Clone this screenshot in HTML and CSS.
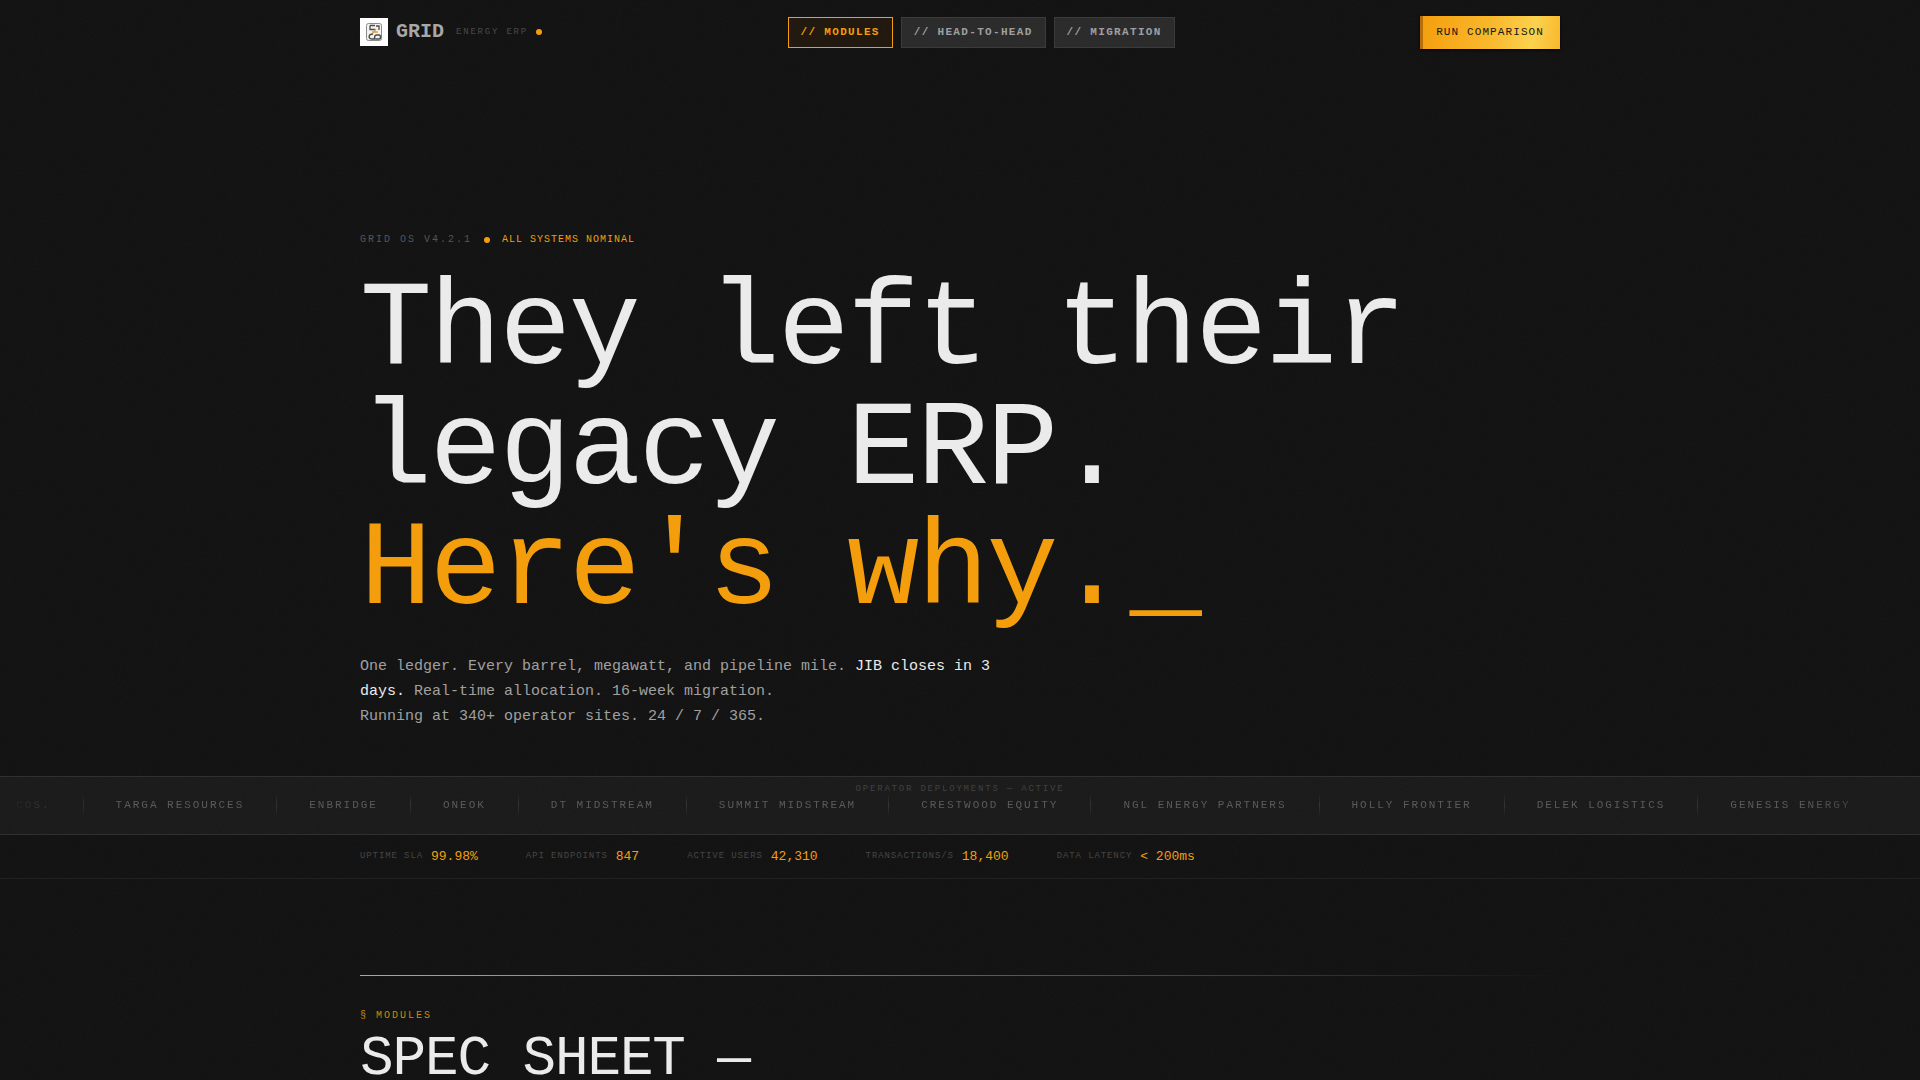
FILE: index.html
```html
<!DOCTYPE html>
<html lang="en">
<head>
    <meta charset="UTF-8">
    <meta name="viewport" content="width=device-width, initial-scale=1.0">
    <title>GRID Energy ERP</title>
    <link rel="stylesheet" href="styles.css">
</head>
<body>

    <!-- film grain over the whole page -->
    <svg class="grain" aria-hidden="true">
        <filter id="grain">
            <feTurbulence type="fractalNoise" baseFrequency="0.8" numOctaves="3" stitchTiles="stitch"/>
            <feColorMatrix type="saturate" values="0"/>
        </filter>
        <rect width="100%" height="100%" filter="url(#grain)"/>
    </svg>

    <header class="container nav">
        <a class="brand" href="#">
            <svg class="logo" viewBox="0 0 28 28" aria-hidden="true">
                <rect width="28" height="28" fill="#fff"/>
                <rect x="6.5" y="5.5" width="15" height="17" rx="2" fill="#f4f4f2" stroke="#8b8b8b"/>
                <path d="M10 7.5h5M10 7.5v4h5M16 8h3v4" fill="none" stroke="#4a4a4a" stroke-width="1.3"/>
                <path d="M12 14h6M16 11l-3 4" fill="none" stroke="#e0a040" stroke-width="1.5"/>
                <path d="M13 16c-5 0-5 5-1 5h3M16 17h3c2 0 2 4 0 4h-3c-2 0-2-3 0-4" fill="none" stroke="#4a4a4a" stroke-width="1.4"/>
            </svg>
            <span class="brand-name">GRID</span>
            <span class="brand-sub">ENERGY ERP</span>
            <span class="dot"></span>
        </a>
        <nav class="tabs">
            <a class="tab active" href="#modules">// MODULES</a>
            <a class="tab" href="#compare">// HEAD-TO-HEAD</a>
            <a class="tab" href="#migration">// MIGRATION</a>
        </nav>
        <button class="cta" type="button">RUN COMPARISON</button>
    </header>

    <main>
        <section class="container hero">
            <p class="status">
                <span class="version">GRID OS V4.2.1</span>
                <span class="dot"></span>
                <span class="state">ALL SYSTEMS NOMINAL</span>
            </p>
            <h1>They left their<br>legacy ERP.<br><span class="accent">Here's why.<span class="cursor">_</span></span></h1>
            <p class="lead">One ledger. Every barrel, megawatt, and pipeline mile. <strong>JIB closes in 3 days.</strong> Real-time allocation. 16-week migration.<br>Running at 340+ operator sites. 24 / 7 / 365.</p>
        </section>

        <section class="operators">
            <p class="operators-label">OPERATOR DEPLOYMENTS — ACTIVE</p>
            <div class="marquee">
                <ul class="track">
                    <li>WILLIAMS COS.</li>
                    <li>TARGA RESOURCES</li>
                    <li>ENBRIDGE</li>
                    <li>ONEOK</li>
                    <li>DT MIDSTREAM</li>
                    <li>SUMMIT MIDSTREAM</li>
                    <li>CRESTWOOD EQUITY</li>
                    <li>NGL ENERGY PARTNERS</li>
                    <li>HOLLY FRONTIER</li>
                    <li>DELEK LOGISTICS</li>
                    <li>GENESIS ENERGY</li>
                </ul>
            </div>
        </section>

        <section class="stats">
            <dl class="container stats-row">
                <div class="stat"><dt>UPTIME SLA</dt><dd>99.98%</dd></div>
                <div class="stat"><dt>API ENDPOINTS</dt><dd>847</dd></div>
                <div class="stat"><dt>ACTIVE USERS</dt><dd>42,310</dd></div>
                <div class="stat"><dt>TRANSACTIONS/S</dt><dd>18,400</dd></div>
                <div class="stat"><dt>DATA LATENCY</dt><dd>&lt; 200ms</dd></div>
            </dl>
        </section>

        <section class="container modules" id="modules">
            <p class="eyebrow">§ MODULES</p>
            <h2>SPEC SHEET —</h2>
        </section>
    </main>

</body>
</html>
```
FILE: styles.css
```css
* {
    box-sizing: border-box;
    margin: 0;
    padding: 0;
}
body {
    background: #121212;
    color: #ececec;
    font-family: "Liberation Mono", "Courier New", monospace;
    overflow-x: hidden;
}
a {
    color: inherit;
    text-decoration: none;
}
.grain {
    position: fixed;
    inset: 0;
    width: 100%;
    height: 100%;
    opacity: 0.03;
    pointer-events: none;
    z-index: 10;
}
.container {
    width: 100%;
    max-width: 1200px;
    margin: 0 auto;
}
.dot {
    width: 6px;
    height: 6px;
    border-radius: 50%;
    background: #f59e0b;
}

/* nav */
.nav {
    display: flex;
    justify-content: space-between;
    align-items: center;
    padding: 16px 0;
}
.brand {
    display: flex;
    align-items: center;
    gap: 8px;
    padding-bottom: 1px;
}
.logo {
    width: 28px;
    height: 28px;
}
.brand-name {
    font-size: 20px;
    font-weight: 700;
    line-height: 24px;
    color: #a8a8a8;
    margin-right: 4px;
}
.brand-sub {
    font-size: 9px;
    letter-spacing: 0.2em;
    color: #484848;
}
.tabs {
    display: flex;
    gap: 8px;
}
.tab {
    padding: 8px 12px;
    border: 1px solid #3a3a3a;
    background: #2a2a2a;
    color: #a0a0a0;
    font-size: 11px;
    font-weight: 700;
    line-height: 13px;
    letter-spacing: 0.12em;
}
.tab.active {
    border-color: #f59e0b;
    background: #20180e;
    color: #f59e0b;
}
.cta {
    padding: 10px 16px;
    border: 0;
    background: linear-gradient(100deg, #f59e0b 0%, #fbb82a 50%, #fcd34d 80%, #fbb829 100%);
    box-shadow: inset 3px 0 0 #b86d08, 0 1px 3px #000;
    color: #141414;
    font-family: inherit;
    font-size: 11px;
    line-height: 13px;
    letter-spacing: 0.1em;
}

/* hero */
.hero {
    padding: 168px 0 47px;
}
.status {
    display: flex;
    align-items: center;
    gap: 12px;
    margin-bottom: 25px;
    font-size: 10px;
    line-height: 13px;
}
.version {
    color: #555;
    letter-spacing: 0.2em;
}
.state {
    color: #f59e0b;
    letter-spacing: 0.1em;
}
h1 {
    margin-bottom: 23px;
    font-size: 120px;
    font-weight: 400;
    line-height: 1;
    letter-spacing: -0.02em;
}
.accent {
    color: #f59e0b;
}
.cursor {
    margin-left: 4px;
}
.lead {
    max-width: 640px;
    color: #a0a0a0;
    font-size: 15px;
    line-height: 25px;
}
.lead strong {
    color: #ececec;
    font-weight: 400;
}

/* operator strip */
.operators {
    position: relative;
    border-top: 1px solid #2e2e2e;
    border-bottom: 1px solid #2e2e2e;
    background: #1a1a1a;
}
.operators-label {
    position: absolute;
    top: 6px;
    left: 0;
    right: 0;
    text-align: center;
    color: #404040;
    font-size: 9px;
    line-height: 12px;
    letter-spacing: 0.2em;
}
.marquee {
    overflow: hidden;
    padding: 16px 0 17px;
    -webkit-mask-image: linear-gradient(90deg, transparent, #000 6%, #000 94%, transparent);
    mask-image: linear-gradient(90deg, transparent, #000 6%, #000 94%, transparent);
}
.track {
    display: flex;
    width: max-content;
    margin-left: -61px;
    list-style: none;
}
.track li {
    display: flex;
    align-items: center;
    height: 24px;
    color: #5a5a5a;
    font-size: 11px;
    letter-spacing: 0.18em;
    white-space: nowrap;
}
.track li::after {
    content: "";
    width: 1px;
    height: 24px;
    margin: 0 32px;
    background: linear-gradient(transparent, #333, transparent);
}
.track li:last-child::after {
    display: none;
}

/* stats */
.stats {
    border-bottom: 1px solid #1f1f1f;
}
.stats-row {
    display: flex;
    gap: 48px;
    padding: 14px 0;
}
.stat {
    display: flex;
    align-items: center;
    gap: 8px;
    line-height: 15px;
}
.stat dt {
    color: #444;
    font-size: 9px;
    letter-spacing: 0.1em;
}
.stat dd {
    color: #f59e0b;
    font-size: 13px;
}

/* modules */
.modules {
    margin-top: 96px;
}
.modules::before {
    content: "";
    display: block;
    height: 1px;
    margin-bottom: 33px;
    background: linear-gradient(90deg, #f59e0b, transparent);
}
.eyebrow {
    margin-bottom: 9px;
    color: #d0860c;
    font-size: 10px;
    line-height: 13px;
    letter-spacing: 0.2em;
}
h2 {
    font-size: 56px;
    font-weight: 400;
    line-height: 1;
    letter-spacing: -0.02em;
}
```
